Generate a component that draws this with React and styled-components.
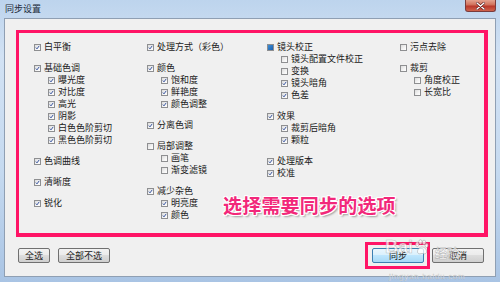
import styled, { createGlobalStyle } from 'styled-components';

const GlobalStyle = createGlobalStyle`
  html, body {
    margin: 0;
    padding: 0;
  }
  body {
    width: 500px;
    height: 282px;
    overflow: hidden;
    font-family: "Noto Sans CJK SC", "Noto Sans", sans-serif;
  }
`;

// columns -> groups -> top level items (with optional children)
const columns = [
  [
    [{ label: '白平衡', state: 'on' }],
    [{
      label: '基础色调', state: 'on', children: [
        { label: '曝光度', state: 'on' },
        { label: '对比度', state: 'on' },
        { label: '高光', state: 'on' },
        { label: '阴影', state: 'on' },
        { label: '白色色阶剪切', state: 'on' },
        { label: '黑色色阶剪切', state: 'on' },
      ]
    }],
    [{ label: '色调曲线', state: 'on' }],
    [{ label: '清晰度', state: 'on' }],
    [{ label: '锐化', state: 'on' }],
  ],
  [
    [{ label: '处理方式（彩色）', state: 'on' }],
    [{
      label: '颜色', state: 'on', children: [
        { label: '饱和度', state: 'on' },
        { label: '鲜艳度', state: 'on' },
        { label: '颜色调整', state: 'on' },
      ]
    }],
    [{ label: '分离色调', state: 'on' }],
    [{
      label: '局部调整', state: 'off', children: [
        { label: '画笔', state: 'off' },
        { label: '渐变滤镜', state: 'off' },
      ]
    }],
    [{
      label: '减少杂色', state: 'on', children: [
        { label: '明亮度', state: 'on' },
        { label: '颜色', state: 'on' },
      ]
    }],
  ],
  [
    [{
      label: '镜头校正', state: 'mixed', children: [
        { label: '镜头配置文件校正', state: 'off' },
        { label: '变换', state: 'off' },
        { label: '镜头暗角', state: 'on' },
        { label: '色差', state: 'on' },
      ]
    }],
    [{
      label: '效果', state: 'on', children: [
        { label: '裁剪后暗角', state: 'on' },
        { label: '颗粒', state: 'on' },
      ]
    }],
    [
      { label: '处理版本', state: 'on' },
      { label: '校准', state: 'on' },
    ],
  ],
  [
    [{ label: '污点去除', state: 'off' }],
    [{
      label: '裁剪', state: 'off', children: [
        { label: '角度校正', state: 'off' },
        { label: '长宽比', state: 'off' },
      ]
    }],
  ],
];

function CheckBox({ state }) {
  return (
    <Box>
      {state === 'on' && (
        <svg width="7" height="7" viewBox="0 0 7 7">
          <polyline points="1.2,3.6 2.8,5.4 5.9,1.2" fill="none" stroke="#2b4a9a" strokeWidth="1.3" />
        </svg>
      )}
      {state === 'mixed' && <MixedFill />}
    </Box>
  );
}

function Option({ item, sub }) {
  return (
    <Row $sub={sub}>
      <CheckBox state={item.state} />
      <Label>{item.label}</Label>
    </Row>
  );
}

function PawIcon() {
  return (
    <svg width="17" height="17" viewBox="0 0 16 16">
      <g fill="rgba(255,255,255,0.75)" stroke="rgba(120,120,120,0.45)" strokeWidth="0.7">
        <ellipse cx="4" cy="5" rx="1.6" ry="2.1" />
        <ellipse cx="7" cy="2.8" rx="1.6" ry="2.1" />
        <ellipse cx="10.4" cy="3.2" rx="1.6" ry="2.1" />
        <ellipse cx="12.8" cy="6" rx="1.5" ry="2" />
        <path d="M8.5 7.5 C5.5 7.5 3.5 11 4.5 13 C5.5 14.8 7.5 13.6 8.5 13.6 C9.8 13.6 11.8 14.8 12.6 12.8 C13.4 10.6 11.4 7.5 8.5 7.5 Z" />
      </g>
    </svg>
  );
}

export default function App() {
  return (
    <>
      <GlobalStyle />
      <Window>
        <TitleBar>
          <Title>同步设置</Title>
          <CloseButton>
            <svg width="9" height="8" viewBox="0 0 9 8">
              <path d="M1 1 L8 7 M8 1 L1 7" stroke="#5a1a1a" strokeWidth="2.6" strokeLinecap="round" />
              <path d="M1 1 L8 7 M8 1 L1 7" stroke="#ffffff" strokeWidth="1.4" strokeLinecap="round" />
            </svg>
          </CloseButton>
        </TitleBar>
        <Client>
          <OptionsFrame>
            <Columns>
              {columns.map((groups, ci) => (
                <Column key={ci}>
                  {groups.map((group, gi) => (
                    <Group key={gi}>
                      {group.map((item) => (
                        <div key={item.label}>
                          <Option item={item} />
                          {item.children && item.children.map((child) => (
                            <Option key={child.label} item={child} sub />
                          ))}
                        </div>
                      ))}
                    </Group>
                  ))}
                </Column>
              ))}
            </Columns>
            <Annotation>选择需要同步的选项</Annotation>
          </OptionsFrame>
          <ButtonBar>
            <ButtonGroup>
              <Button $w={32}>全选</Button>
              <Button $w={52}>全部不选</Button>
            </ButtonGroup>
            <ButtonGroup>
              <Highlight>
                <Button $w={52} $primary>同步</Button>
              </Highlight>
              <Button $w={52}>取消</Button>
            </ButtonGroup>
          </ButtonBar>
          <Watermark>
            <WatermarkLogo>
              Bai<PawIcon /><WatermarkCn>经验</WatermarkCn>
            </WatermarkLogo>
            <WatermarkUrl>jingyan.baidu.com</WatermarkUrl>
          </Watermark>
        </Client>
      </Window>
    </>
  );
}

const Window = styled.div`
  width: 500px;
  height: 282px;
  box-sizing: border-box;
  display: flex;
  flex-direction: column;
  padding: 0 4px 5px 4px;
  background: linear-gradient(180deg, #bdd4ed 0%, #d2e2f4 20%, #c6daf0 60%, #a9c4e4 100%);
`;

const TitleBar = styled.div`
  height: 18px;
  display: flex;
  align-items: flex-start;
  justify-content: space-between;
  flex-shrink: 0;
`;

const Title = styled.span`
  font-size: 9px;
  line-height: 18px;
  color: #1b2a3a;
  padding-left: 1px;
`;

const CloseButton = styled.div`
  width: 31px;
  height: 12px;
  box-sizing: border-box;
  display: flex;
  align-items: center;
  justify-content: center;
  border: 1px solid #7a3b3b;
  border-top: none;
  border-radius: 0 0 3px 3px;
  background: linear-gradient(180deg, #e4a28f 0%, #d0705a 45%, #b9372a 55%, #d0634c 100%);
`;

const Client = styled.div`
  position: relative;
  flex: 1;
  display: flex;
  flex-direction: column;
  background: #f0f0f0;
  border: 1px solid #8f9fb3;
`;

const OptionsFrame = styled.div`
  position: relative;
  margin: 11px 7px 0 11px;
  height: 207px;
  box-sizing: border-box;
  border: 3px solid #ff1466;
  border-right-width: 4px;
  border-bottom-width: 4px;
  padding: 8px 0 0 15px;
`;

const Columns = styled.div`
  display: grid;
  grid-template-columns: 113px 120px 133px 1fr;
`;

const Column = styled.div`
  display: flex;
  flex-direction: column;
  gap: 9px;
`;

const Group = styled.div`
  display: flex;
  flex-direction: column;
`;

const Row = styled.div`
  display: flex;
  align-items: center;
  gap: 3px;
  height: 12px;
  padding-left: ${(p) => (p.$sub ? '14px' : '0')};
`;

const Box = styled.span`
  width: 7px;
  height: 7px;
  box-sizing: border-box;
  flex-shrink: 0;
  display: flex;
  align-items: center;
  justify-content: center;
  border: 1px solid #8e8f91;
  background: linear-gradient(135deg, #dcdcdc 0%, #f4f4f4 60%, #ffffff 100%);
  overflow: visible;
`;

const MixedFill = styled.span`
  width: 5px;
  height: 5px;
  background: linear-gradient(135deg, #3e8fd6 0%, #1b5fae 100%);
`;

const Label = styled.span`
  font-size: 9px;
  line-height: 12px;
  color: #1a1a1a;
  white-space: nowrap;
`;

const Annotation = styled.div`
  position: absolute;
  left: 204px;
  top: 158px;
  font-size: 19px;
  font-weight: 700;
  letter-spacing: 0.2px;
  color: #f2287a;
  white-space: nowrap;
  text-shadow:
    1px 0 0 #fff, -1px 0 0 #fff, 0 1px 0 #fff, 0 -1px 0 #fff,
    1px 1px 0 #fff, -1px -1px 0 #fff, 1px -1px 0 #fff, -1px 1px 0 #fff,
    2px 2px 2px rgba(0, 0, 0, 0.35);
`;

const ButtonBar = styled.div`
  display: flex;
  justify-content: space-between;
  margin: 11px 11px 0 13px;
`;

const ButtonGroup = styled.div`
  display: flex;
  gap: 8px;
  align-items: center;
`;

const Button = styled.div`
  width: ${(p) => p.$w}px;
  height: 15px;
  box-sizing: border-box;
  display: flex;
  align-items: center;
  justify-content: center;
  font-size: 9px;
  color: #1a1a1a;
  border-radius: 2px;
  border: 1px solid ${(p) => (p.$primary ? '#3c7fb1' : '#707070')};
  background: ${(p) => (p.$primary
    ? 'linear-gradient(180deg, #eaf6fd 0%, #d9f0fc 50%, #bee6fd 50%, #a7d9f5 100%)'
    : 'linear-gradient(180deg, #f2f2f2 0%, #ebebeb 50%, #dddddd 50%, #cfcfcf 100%)')};
`;

const Highlight = styled.div`
  display: flex;
  border: 3px solid #ff1466;
  padding: 3px 3px 3px 4px;
  margin: -6px -6px -6px -7px;
`;

const Watermark = styled.div`
  position: absolute;
  left: 380px;
  top: 214px;
  display: flex;
  flex-direction: column;
  align-items: flex-start;
  pointer-events: none;
`;

const WatermarkLogo = styled.div`
  display: flex;
  align-items: center;
  font-family: "Liberation Sans", sans-serif;
  font-size: 18px;
  font-weight: 700;
  color: rgba(255, 255, 255, 0.7);
  -webkit-text-stroke: 0.6px rgba(110, 110, 110, 0.4);
  line-height: 19px;
`;

const WatermarkCn = styled.span`
  font-family: "Noto Sans CJK SC", sans-serif;
  font-size: 12px;
  margin-left: 5px;
  margin-top: 10px;
`;

const WatermarkUrl = styled.div`
  font-family: "Liberation Sans", sans-serif;
  font-size: 8px;
  line-height: 10px;
  color: rgba(255, 255, 255, 0.8);
  -webkit-text-stroke: 0.4px rgba(110, 110, 110, 0.35);
  margin-left: 4px;
  margin-top: 10px;
  letter-spacing: 0.7px;
`;
